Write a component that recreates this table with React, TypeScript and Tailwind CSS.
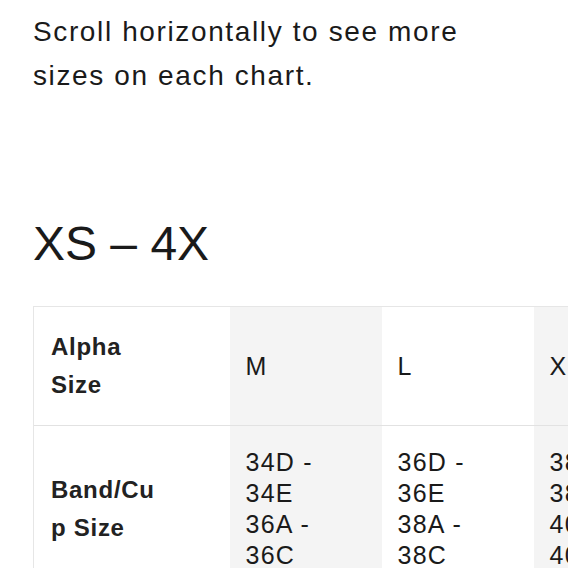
const sizes = [
  { label: "M", fit: "34D - 34E 36A - 36C", shade: true },
  { label: "L", fit: "36D - 36E 38A - 38C", shade: false },
  { label: "XL", fit: "38D - 38E 40A - 40C", shade: true },
  { label: "2X", fit: "40D - 40E 42A - 42C", shade: false },
  { label: "3X", fit: "42D - 42E 44A - 44C", shade: true },
  { label: "4X", fit: "44D - 44E 46A - 46C", shade: false },
]

export default function App() {
  return (
    <div className="h-[568px] w-[568px] overflow-hidden bg-white text-[#1a1a1a] font-['Liberation_Sans',Arial,sans-serif]">
      <div className="pl-[33px] pt-[10px]">
        <p className="w-[460px] text-[28px] leading-[44px] tracking-[0.058em]">
          Scroll horizontally to see more sizes on each chart.
        </p>

        <h2 className="mt-[122px] text-[48px] leading-[48px] font-normal">XS – 4X</h2>

        <div className="mt-[38px] w-[535px] overflow-hidden">
          <table className="w-[1108px] table-fixed border-collapse text-[25px] tracking-[0.05em]">
            <colgroup>
              <col className="w-[196px]" />
              {sizes.map((s) => (
                <col key={s.label} className="w-[152px]" />
              ))}
            </colgroup>
            <tbody>
              <tr className="border-t border-[#e6e6e6]">
                <th className="border-l border-[#e6e6e6] py-[21px] pl-[17px] pr-[62px] text-left align-middle text-[24px] font-bold leading-[38px] tracking-[0.03em] text-[#222]">
                  Alpha Size
                </th>
                {sizes.map((s) => (
                  <td
                    key={s.label}
                    className={`py-[21px] pl-[16px] pr-[36px] align-middle leading-[31px] ${s.shade ? "bg-[#f4f4f4]" : "bg-white"}`}
                  >
                    {s.label}
                  </td>
                ))}
              </tr>
              <tr className="border-t border-[#e2e2e2]">
                <th className="border-l border-[#e6e6e6] py-[21px] pl-[17px] pr-[62px] text-left align-middle text-[24px] font-bold leading-[38px] tracking-[0.03em] text-[#222] break-all">
                  Band/Cup Size
                </th>
                {sizes.map((s) => (
                  <td
                    key={s.label}
                    className={`py-[21px] pl-[16px] pr-[36px] align-middle leading-[31px] ${s.shade ? "bg-[#f4f4f4]" : "bg-white"}`}
                  >
                    {s.fit}
                  </td>
                ))}
              </tr>
            </tbody>
          </table>
        </div>
      </div>
    </div>
  )
}
